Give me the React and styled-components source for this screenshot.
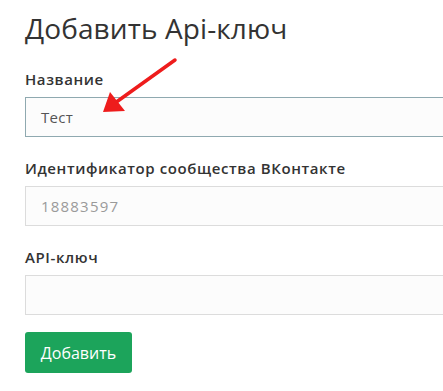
import React from "react";
import styled, { createGlobalStyle } from "styled-components";

const Global = createGlobalStyle`
  html, body { margin: 0; padding: 0; background: #fff; overflow: hidden; }
  body { font-family: "Open Sans", "Noto Sans", sans-serif; color: #333; }
`;

const Page = styled.div`
  position: relative;
  width: 443px;
  height: 391px;
  overflow: hidden;
  padding: 8px 0 0 25px;
  box-sizing: border-box;
`;

const Title = styled.h1`
  margin: 0 0 21px;
  font-size: 28px;
  line-height: 40px;
  font-weight: 400;
  color: #333;
  letter-spacing: 0.1px;
`;

const Field = styled.div`
  display: flex;
  flex-direction: column;
  margin-bottom: ${(p) => p.$gap || 0}px;
`;

const Label = styled.label`
  font-size: 15px;
  line-height: 20px;
  font-weight: 600;
  color: #333;
  letter-spacing: 0.6px;
  margin-bottom: 8px;
`;

const Input = styled.div`
  width: 480px;
  height: 40px;
  box-sizing: border-box;
  border: 1px solid ${(p) => (p.$focused ? "#8fa9b0" : "#dcdcdc")};
  background: #fcfcfc;
  padding: 0 15px;
  display: flex;
  align-items: center;
  font-size: 15px;
  letter-spacing: ${(p) => (p.$placeholder ? "1.2px" : "0.3px")};
  color: ${(p) => (p.$placeholder ? "#9a9a9a" : "#555")};
`;

const Button = styled.button`
  width: 107px;
  height: 41px;
  border: none;
  border-radius: 3px;
  background: #1ca45b;
  color: #fff;
  font-family: inherit;
  font-size: 16px;
  padding: 0;
`;

const Arrow = styled.svg`
  position: absolute;
  left: 0;
  top: 0;
  pointer-events: none;
`;

export default function App() {
  return (
    <Page>
      <Global />
      <Title>Добавить Api-ключ</Title>
      <Field $gap={21}>
        <Label>Название</Label>
        <Input $focused>Тест</Input>
      </Field>
      <Field $gap={21}>
        <Label>Идентификатор сообщества ВКонтакте</Label>
        <Input $placeholder>18883597</Input>
      </Field>
      <Field $gap={17}>
        <Label>API-ключ</Label>
        <Input />
      </Field>
      <Button>Добавить</Button>
      <Arrow width="443" height="391" viewBox="0 0 443 391">
        <line x1="175" y1="60" x2="115" y2="103" stroke="#ee1c1c" strokeWidth="3.5" strokeLinecap="round" />
        <polygon points="103,112 110,92 125,111" fill="#ee1c1c" />
      </Arrow>
    </Page>
  );
}
